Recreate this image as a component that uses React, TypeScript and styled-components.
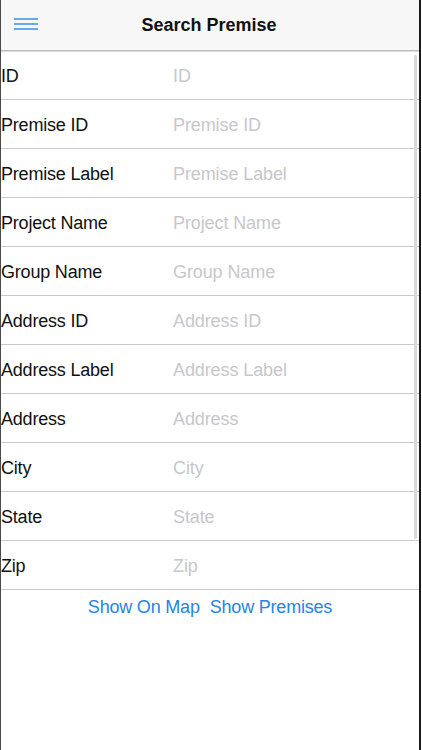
import React from "react"
import styled, { createGlobalStyle } from "styled-components"

const GlobalStyle = createGlobalStyle`
  html, body {
    margin: 0;
    padding: 0;
    background: #fff;
  }
  body {
    font-family: "Liberation Sans", Arial, sans-serif;
  }
`

const Screen = styled.div`
  position: relative;
  box-sizing: border-box;
  width: 421px;
  height: 750px;
  background: #fff;
  border-left: 1px solid #4a4a4a;
  border-right: 2px solid #1a1a1a;
  display: flex;
  flex-direction: column;
`

const Header = styled.header`
  position: relative;
  height: 50px;
  flex: none;
  background: #f7f7f7;
  border-bottom: 1px solid #bdbdbd;
  box-shadow: 0 1px 0 #dcdcdc;
  display: flex;
  align-items: center;
  justify-content: center;
`

const MenuButton = styled.div`
  position: absolute;
  left: 13px;
  top: 18px;
  width: 24px;
  display: flex;
  flex-direction: column;
  gap: 3px;
`

const MenuLine = styled.span`
  display: block;
  height: 2px;
  background: #69a7ee;
`

const Title = styled.h1`
  margin: 0;
  font-size: 18px;
  font-weight: 700;
  color: #111;
  padding-right: 2px;
`

const List = styled.div`
  display: flex;
  flex-direction: column;
`

const Row = styled.div`
  box-sizing: content-box;
  height: 46px;
  padding-top: 2px;
  border-bottom: 1px solid #c9c9c9;
  display: flex;
  align-items: center;
`

const Label = styled.span`
  width: 172px;
  flex: none;
  font-size: 18px;
  color: #111;
  letter-spacing: -0.2px;
`

const Input = styled.input`
  flex: 1;
  border: none;
  outline: none;
  background: transparent;
  padding: 0;
  font-family: inherit;
  font-size: 18px;
  color: #111;
  letter-spacing: -0.1px;

  &::placeholder {
    color: #c7c7cc;
  }
`

const Actions = styled.div`
  display: flex;
  justify-content: center;
  gap: 10px;
  padding: 7px 0 0 0;
`

const Action = styled.button`
  border: none;
  background: none;
  padding: 0;
  font-family: inherit;
  font-size: 18px;
  color: #2784e5;
  letter-spacing: -0.2px;
  cursor: pointer;
`

const ScrollBar = styled.div`
  position: absolute;
  right: 2px;
  top: 55px;
  width: 3px;
  height: 484px;
  background: #d9d9d9;
  border-radius: 1px;
`

const fields = [
  "ID",
  "Premise ID",
  "Premise Label",
  "Project Name",
  "Group Name",
  "Address ID",
  "Address Label",
  "Address",
  "City",
  "State",
  "Zip",
]

const App = () => {
  return (
    <>
      <GlobalStyle />
      <Screen>
        <Header>
          <MenuButton>
            <MenuLine />
            <MenuLine />
            <MenuLine />
          </MenuButton>
          <Title>Search Premise</Title>
        </Header>
        <List>
          {fields.map((f) => (
            <Row key={f}>
              <Label>{f}</Label>
              <Input placeholder={f} />
            </Row>
          ))}
        </List>
        <Actions>
          <Action>Show On Map</Action>
          <Action>Show Premises</Action>
        </Actions>
        <ScrollBar />
      </Screen>
    </>
  )
}

export default App
